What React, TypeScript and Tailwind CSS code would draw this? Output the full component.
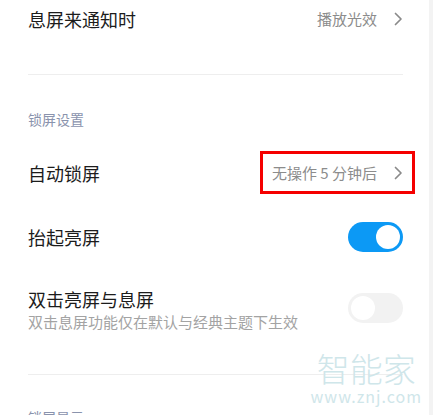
import { ReactNode } from 'react';

const font = { fontFamily: '"Noto Sans CJK SC", "Noto Sans", sans-serif' };

function Chevron() {
    return (
        <svg width="9" height="14" viewBox="0 0 9 14" className="ml-[17px]">
            <path d="M1.5 1.5 L7 7 L1.5 12.5" fill="none" stroke="#8a8a8a" strokeWidth="1.7" strokeLinecap="round" strokeLinejoin="round" />
        </svg>
    );
}

function Toggle({ on }: { on: boolean }) {
    return (
        <div
            className={`flex h-[30px] w-[55px] items-center rounded-full px-[3px] ${
                on ? 'justify-end bg-[#0c99f5]' : 'justify-start bg-[#f2f2f2]'
            }`}
        >
            <div className="h-[24px] w-[24px] rounded-full bg-white" />
        </div>
    );
}

function Row({ title, children, className = '' }: { title: string; children: ReactNode; className?: string }) {
    return (
        <div className={`relative flex h-[44px] shrink-0 items-center justify-between ${className}`}>
            <span className="text-[18px] leading-[24px] text-[#1c1c1c]">{title}</span>
            <div className="flex items-center">{children}</div>
        </div>
    );
}

export default function App() {
    return (
        <div className="flex h-[415px] w-[433px] items-start overflow-hidden bg-white" style={font}>
            <div className="relative flex w-[429px] flex-col pl-[28px] pr-[26px]">
                <div className="flex h-[38px] shrink-0 items-center justify-between">
                    <span className="text-[18px] leading-[24px] text-[#1c1c1c]">息屏来通知时</span>
                    <div className="flex items-center">
                        <span className="text-[15px] text-[#8c8c8c]">播放光效</span>
                        <Chevron />
                    </div>
                </div>

                <div className="mt-[36px] h-px shrink-0 bg-[#eeeeee]" />

                <div className="mt-[34px] h-[20px] shrink-0 text-[14px] leading-[20px] text-[#8a93ad]">锁屏设置</div>

                <Row title="自动锁屏" className="mt-[22px]">
                    <span className="text-[15px] text-[#8c8c8c]">无操作 5 分钟后</span>
                    <Chevron />
                    <div className="absolute -right-[12px] top-0 h-[43px] w-[155px] border-[3px] border-[#f50000]" />
                </Row>

                <Row title="抬起亮屏" className="mt-[20px]">
                    <Toggle on />
                </Row>

                <div className="mt-[28px] flex shrink-0 items-start justify-between">
                    <div className="flex flex-col">
                        <span className="text-[18px] leading-[24px] text-[#1c1c1c]">双击亮屏与息屏</span>
                        <span className="text-[15px] leading-[22px] text-[#a3a3a3]">双击息屏功能仅在默认与经典主题下生效</span>
                    </div>
                    <div className="mt-[6px]">
                        <Toggle on={false} />
                    </div>
                </div>

                <div className="mt-[41px] h-px shrink-0 bg-[#eeeeee]" />

                <div className="mt-[32px] h-[20px] shrink-0 text-[14px] leading-[20px] text-[#8a93ad]">锁屏显示</div>

                <div className="pointer-events-none absolute right-[7px] top-[351px] flex flex-col items-center text-[#cfe6ea]">
                    <span className="text-[33px] font-light leading-[34px]">智能家</span>
                    <span className="mt-[3px] text-[16px] leading-[16px] tracking-[1px]">www.znj.com</span>
                </div>
            </div>
            <div className="h-[415px] w-[4px] shrink-0 bg-[#f3f3f3]" />
        </div>
    );
}
